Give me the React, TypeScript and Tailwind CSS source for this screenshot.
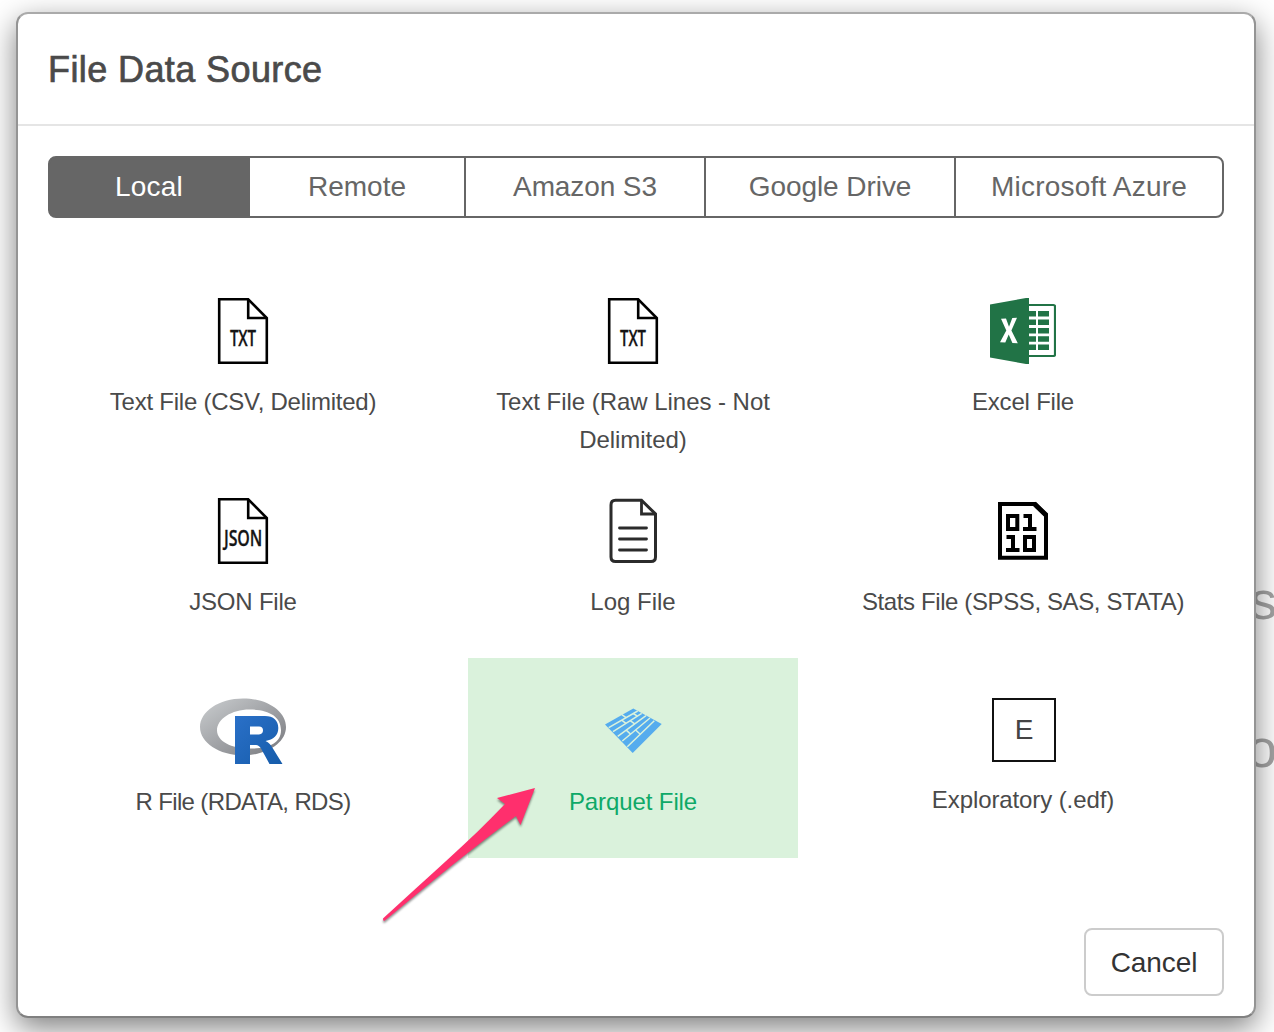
import type { ReactNode } from "react";

const tabs = [
  { label: "Local", cls: "w-[202px] bg-[#666] text-white tracking-[0.2px]" },
  { label: "Remote", cls: "w-[216px] border-r-2" },
  { label: "Amazon S3", cls: "w-[240px] border-r-2 tracking-[-0.1px]" },
  { label: "Google Drive", cls: "w-[250px] border-r-2 tracking-[-0.06px]" },
  { label: "Microsoft Azure", cls: "w-[268px] pr-0.5 tracking-[0.2px]" },
];

function LabeledFile({ label, width }: { label: string; width: number }) {
  return (
    <svg className="shrink-0" width="52" height="66" viewBox="0 0 52 66" fill="none" stroke="#000" strokeWidth="2.600">
      <path d="M2.200 1.300H31.200L49.800 20V64.700H2.200Z" />
      <path d="M31.200 1.300V20H49.800" />
      <text x={(52 - width) / 2} y="47.500" fill="#151515" stroke="#151515" strokeWidth="0.300" fontSize="21.500" fontWeight="600" textLength={width} lengthAdjust="spacingAndGlyphs" fontFamily="'Open Sans', sans-serif">
        {label}
      </text>
    </svg>
  );
}

function LogIcon() {
  return (
    <svg className="shrink-0" width="50" height="66" viewBox="0 0 50 66" fill="none" stroke="#2b2b2b" strokeWidth="3">
      <path d="M7.500 2.300H33.500L47.500 16V59Q47.500 63.500 43 63.500H7.500Q3 63.500 3 59V7Q3 2.300 7.500 2.300Z" />
      <path d="M33.500 3V16H46.500" strokeWidth="2.8" />
      <path d="M11.500 30H38.500M11.500 41H38.500M11.500 52H38.500" strokeLinecap="round" strokeWidth="2.8" />
    </svg>
  );
}

function ExcelIcon() {
  return (
    <svg className="shrink-0" width="66" height="66" viewBox="0 0 66 66">
      <path d="M36 7H63.500Q65 7 65 8.500V56.500Q65 58 63.500 58H36Z" fill="#fff" stroke="#217346" strokeWidth="2.200" />
      <path d="M0 6.500L36 0H39V66H36L0 59.500Z" fill="#217346" />
      <path d="M39 13h7v5.500h-7zM48 13h11v5.500H48zM39 21.500h7v5.500h-7zM48 21.500h11v5.500H48zM39 30h7v5.500h-7zM48 30h11v5.500H48zM39 38.300h7v5.500h-7zM48 38.300h11v5.500H48zM39 46.500h7v5.500h-7zM48 46.500h11v5.500H48z" fill="#217346" />
      <path d="M11 20.700L16 20.400L19 28.800L22.300 20.100L27 19.800L21.400 32.500L27.800 45.300L22.400 45L18.700 36.600L15.300 44.500L10 44.200L16.300 32.500Z" fill="#fff" />
    </svg>
  );
}

function StatsIcon() {
  return (
    <svg className="shrink-0" width="50" height="66" viewBox="0 0 50 66" fill="none" stroke="#000" strokeWidth="4">
      <path d="M2 6H37L48 17V59.700H2Z" />
      <path d="M36 5.500L49 18" strokeWidth="5" />
      <path d="M10 18H19.300V31H10ZM27 39H36V52H27Z" />
      <path d="M25.500 18H32V31M25 31H38.500M8.500 39H15V52M8 52H21.500" />
    </svg>
  );
}

function RIcon() {
  return (
    <svg className="shrink-0" width="86" height="66" viewBox="0 0 86 66">
      <defs>
        <linearGradient id="ring" x1="0" y1="0" x2="1" y2="1">
          <stop offset="0" stopColor="#cbced0" />
          <stop offset="1" stopColor="#77787d" />
        </linearGradient>
        <linearGradient id="letter" x1="0" y1="0" x2="1" y2="1">
          <stop offset="0" stopColor="#2a70c8" />
          <stop offset="1" stopColor="#165caa" />
        </linearGradient>
      </defs>
      <path d="M43 .4C19 .4 0 13.300 0 29S19 57.300 43 57.300S86 44.700 86 29S67 .4 43 .4ZM49.500 11.500C67.500 11.500 81 17.500 81 32.300C81 46 67.500 50.500 49.500 50.500S17 43.500 17 32.300S31.500 11.500 49.500 11.500Z" fill="url(#ring)" fillRule="evenodd" />
      <path d="M35 18H65C73.500 18 78.300 22.500 78.300 30C78.300 37.500 73.500 41.500 65.500 43C69 44.500 70.500 46.500 72 49L82.500 66H69.500L61 50.500Q59 47 56 47H50V66H35ZM50 28.500V36.500H59Q63 36 63 32.300T59 28.500Z" fill="url(#letter)" fillRule="evenodd" />
    </svg>
  );
}

function ParquetIcon() {
  return (
    <svg className="shrink-0" width="58" height="66" viewBox="0 0 58 66">
      <path d="M29.300 10.500L57.700 26L28.700 55L1 26.500Z" fill="#55acee" />
      <g stroke="#daf2dc" strokeWidth="1.500" fill="none">
        <path d="M4.700 29.700L33.700 13M9 33.700L37.700 15.300M13.700 38.300L42 17.700M18.300 43L46 20M23.300 48.700L50.300 22.700" />
        <path d="M17.800 16.700L22.100 19.700M17.700 22.200L21.900 25.400M29.300 15.500L33.400 18.100M26.200 22.700L30.700 25.900M22.200 32.100L26.600 36.100M31.600 32L36.300 36.200" />
      </g>
    </svg>
  );
}

function EdfIcon() {
  return (
    <div className="flex h-16 w-16 shrink-0 translate-x-px items-center justify-center border-2 border-[#111] text-[28px] leading-none text-[#444]">E</div>
  );
}

const items: { label: ReactNode; icon: ReactNode; cls: string }[] = [
  { label: "Text File (CSV, Delimited)", icon: <LabeledFile label="TXT" width={26} />, cls: "tracking-[-0.24px]" },
  { label: <>Text File (Raw Lines - Not<br />Delimited)</>, icon: <LabeledFile label="TXT" width={26} />, cls: "tracking-[-0.04px]" },
  { label: "Excel File", icon: <ExcelIcon />, cls: "tracking-[-0.2px]" },
  { label: "JSON File", icon: <LabeledFile label="JSON" width={38} />, cls: "tracking-[-0.2px]" },
  { label: "Log File", icon: <LogIcon />, cls: "" },
  { label: "Stats File (SPSS, SAS, STATA)", icon: <StatsIcon />, cls: "tracking-[-0.39px]" },
  { label: "R File (RDATA, RDS)", icon: <RIcon />, cls: "tracking-[-0.63px]" },
  { label: "Parquet File", icon: <ParquetIcon />, cls: "bg-[#daf2dc] text-[#0fa968] tracking-[-0.1px]" },
  { label: "Exploratory (.edf)", icon: <EdfIcon />, cls: "tracking-[-0.1px]" },
];

export default function App() {
  return (
    <div className="relative h-[1032px] w-[1274px] overflow-hidden bg-white pl-4 pt-3 font-['Liberation_Sans',Arial,sans-serif] text-[#4a4a4a]">
      <div className="absolute left-[1250px] top-[573px] text-[54px] leading-[54px] text-[#a4a4a4]">s</div>
      <div className="absolute left-[1247px] top-[721px] text-[54px] leading-[54px] text-[#a4a4a4]">o</div>
      <div className="relative h-[1006px] w-[1240px] rounded-xl border-2 border-x-[#949494] border-t-[#aaa] border-b-[#808080] bg-white bg-clip-padding shadow-[0_10px_30px_rgba(0,0,0,0.5)]">
        <header className="flex h-28 items-center border-b-2 border-[#e5e5e5] pl-[30px] pt-0.5">
          <h1 className="text-[36px] tracking-[0.4px] [-webkit-text-stroke:0.7px_#4a4a4a]">File Data Source</h1>
        </header>
        <nav className="mx-[30px] mt-[30px] flex h-[62px] overflow-hidden rounded-lg border-2 border-[#666] bg-[linear-gradient(to_right,#666_100px,#fff_100px)] text-[28px] text-[#666]">
          {tabs.map((t, i) => (
            <button key={t.label} className={`flex items-center justify-center border-[#666] ${i === 0 ? "-ml-0.5" : ""} ${i === 4 ? "-mr-0.5" : ""} shrink-0 whitespace-nowrap ${t.cls}`}>
              {t.label}
            </button>
          ))}
        </nav>
        <main className="mx-[60px] mt-10 grid grid-cols-[330px_330px_330px] gap-x-[60px]">
          {items.map((it, i) => (
            <div key={i} className={`flex h-[200px] flex-col items-center pt-10 ${it.cls}`}>
              {it.icon}
              <div className="mt-[19px] whitespace-nowrap text-center text-[24px] leading-[38px]">{it.label}</div>
            </div>
          ))}
        </main>
        <footer className="mt-[70px] flex justify-end pr-[30px]">
          <button className="h-[68px] w-[140px] rounded-lg border-2 border-[#ccc] pt-0.5 text-[28px] tracking-[-0.1px] text-[#333]">Cancel</button>
        </footer>
      </div>
      <svg className="absolute left-[370px] top-[770px]" width="190" height="165" viewBox="0 0 190 165">
        <path d="M165 18L127 28L135 34C100 71 58 107 13 148.500Q13 152 15 150.500C60 113 105 76 146 46L150.500 55Z" fill="#ff2f6d" className="drop-shadow-[0_2px_1px_rgba(0,0,0,0.45)]" />
      </svg>
    </div>
  );
}
